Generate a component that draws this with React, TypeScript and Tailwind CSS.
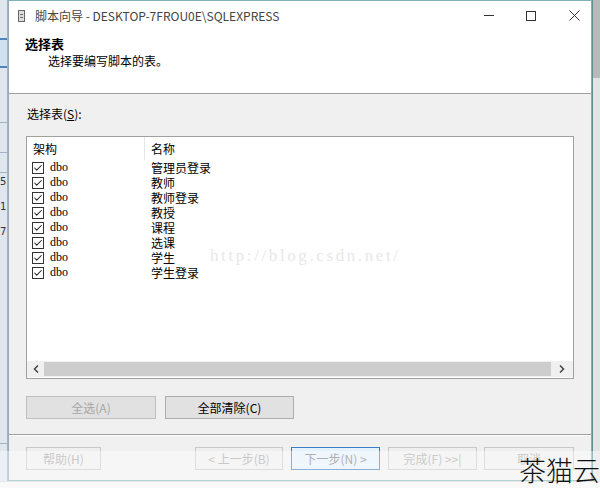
import { Check } from "lucide-react";

const rows = ["管理员登录", "教师", "教师登录", "教授", "课程", "选课", "学生", "学生登录"];

const cjk = { fontFamily: '"Noto Sans CJK SC", "Noto Sans", sans-serif' };

function Btn({ label, disabled, focused, className }: { label: string; disabled?: boolean; focused?: boolean; className: string }) {
    return (
        <div
            className={`h-[23px] flex items-center justify-center text-[12px] border ${
                focused ? "border-[#3a7fc4] bg-[#e5f1fb]" : "border-[#adadad] bg-[#e1e1e1]"
            } ${disabled ? "text-[#a6a6a6]" : "text-black"} ${className}`}
        >
            {label}
        </div>
    );
}

export default function App() {
    return (
        <div className="w-[600px] h-[488px] relative overflow-hidden bg-[#f4f4f4] flex flex-col" style={cjk}>
            <div className="flex h-[481px]">
                {/* background app, left */}
                <div className="w-[8px] bg-[#dfe6ee] flex flex-col text-[10px] leading-none text-[#333] border-r border-[#9fb2c6]">
                    <div className="h-[38px]" />
                    <div className="h-[30px] border-y-2 border-[#4f86b8] bg-[#cfe0f0]" />
                    <div className="h-[55px] border-b border-[#9fb2c6]" />
                    <div className="h-[30px] border-b border-[#9fb2c6]" />
                    <div className="h-[20px] border-b border-[#9fb2c6]" />
                    <div className="mt-[4px] space-y-[15px] font-['DejaVu_Sans']">
                        <div>5</div>
                        <div>1</div>
                        <div>7</div>
                    </div>
                    <div className="flex-1" />
                    <div className="h-[38px] border-t border-[#9fb2c6]" />
                </div>

                {/* dialog */}
                <div className="w-[584px] flex flex-col bg-[#f0f0f0] border border-[#7db3b6] border-l-[#9ab]">
                    {/* title bar */}
                    <div className="h-[29px] bg-white flex items-center">
                        <div className="ml-[9px] w-[7px] h-[12px] border border-[#666] bg-[#ddd] flex flex-col justify-center gap-[2px] px-[1px]">
                            <div className="h-px bg-[#666]" />
                            <div className="h-px bg-[#666]" />
                        </div>
                        <div className="ml-[10px] text-[12px] text-[#444]">脚本向导 - DESKTOP-7FROU0E\SQLEXPRESS</div>
                        <div className="flex-1" />
                        <div className="w-[10px] h-px bg-[#333] mr-[32px]" />
                        <div className="w-[10px] h-[10px] border border-[#333] mr-[33px]" />
                        <svg width="11" height="11" viewBox="0 0 11 11" className="mr-[11px]">
                            <path d="M0.5 0.5L10.5 10.5M10.5 0.5L0.5 10.5" stroke="#333" strokeWidth="1" />
                        </svg>
                    </div>
                    {/* header */}
                    <div className="h-[64px] bg-white border-b border-[#a0a0a0] pl-[16px] pt-[5px]">
                        <div className="text-[13px] font-bold leading-[18px] text-black">选择表</div>
                        <div className="text-[12px] leading-[15px] pl-[23px] text-black">选择要编写脚本的表。</div>
                    </div>
                    {/* body */}
                    <div className="flex-1 flex flex-col px-[17px]">
                        <div className="mt-[12px] ml-[1px] text-[12px] leading-[16px] text-black">选择表(<span className="underline">S</span>):</div>
                        <div className="mt-[14px] h-[243px] bg-white border border-[#a0a0a0] flex flex-col relative">
                            <div className="h-[23px] flex items-center text-[12px] text-black">
                                <div className="w-[118px] pl-[6px] border-r border-[#e5e5e5] h-full flex items-center">架构</div>
                                <div className="pl-[6px]">名称</div>
                            </div>
                            {rows.map((name) => (
                                <div key={name} className="h-[15px] flex items-center text-[12px] leading-[15px] text-black">
                                    <div className="w-[12px] h-[12px] ml-[5px] border border-[#333] bg-white flex items-center justify-center">
                                        <Check size={10} strokeWidth={2.5} className="text-[#222]" />
                                    </div>
                                    <div className="ml-[6px] w-[95px] text-[12px] font-['Liberation_Serif'] leading-[15px]">dbo</div>
                                    <div className="pl-[6px] leading-[15px]">{name}</div>
                                </div>
                            ))}
                            <div className="flex-1" />
                            {/* watermark */}
                            <div className="absolute left-[183px] top-[106px] text-[17px] text-[#e8e8e8] font-['Liberation_Serif'] tracking-[2.6px]">
                                http://blog.csdn.net/
                            </div>
                            {/* horizontal scrollbar */}
                            <div className="h-[16px] mb-[1px] flex items-center bg-[#f0f0f0]">
                                <div className="w-[17px] flex items-center justify-center">
                                    <svg width="6" height="8" viewBox="0 0 6 8"><path d="M5 0.5L1.5 4L5 7.5" stroke="#444" strokeWidth="1.5" fill="none" /></svg>
                                </div>
                                <div className="flex-1 h-[14px] bg-[#cdcdcd]" />
                                <div className="w-[22px] flex items-center justify-center">
                                    <svg width="6" height="8" viewBox="0 0 6 8"><path d="M1 0.5L4.5 4L1 7.5" stroke="#444" strokeWidth="1.5" fill="none" /></svg>
                                </div>
                            </div>
                        </div>
                        <div className="mt-[17px] flex gap-[9px]">
                            <Btn label="全选(A)" disabled className="w-[130px] bg-[#cccccc] border-[#bfbfbf]" />
                            <Btn label="全部清除(C)" className="w-[129px]" />
                        </div>
                    </div>
                    <div className="mt-[12px] border-t border-[#a0a0a0] border-b border-b-white" />
                    <div className="flex items-center px-[17px] pt-[11px] pb-[10px]">
                        <Btn label="帮助(H)" disabled className="w-[75px] bg-[#efefef] border-[#c8c8c8]" />
                        <div className="flex-1" />
                        <Btn label="< 上一步(B)" disabled className="w-[88px] bg-[#efefef] border-[#c8c8c8]" />
                        <Btn label="下一步(N) >" focused className="ml-[8px] w-[89px] text-[#7a7a7a]!" />
                        <Btn label="完成(F) >>|" disabled className="ml-[8px] w-[89px] bg-[#efefef] border-[#c8c8c8]" />
                        <Btn label="取消" disabled className="ml-[7px] w-[90px] bg-[#efefef] border-[#c8c8c8]" />
                    </div>
                </div>

                {/* background app, right */}
                <div className="flex-1 bg-[#e4e4e4] border-l border-[#5e8f92] flex flex-col">
                    <div className="h-[78px] bg-[#b9b9b9]" />
                    <div className="flex-1" />
                </div>
            </div>
            <div className="flex-1 bg-[#f6f6f6] border-t border-[#d8d8d8]" />

            {/* overlay watermark */}
            <div className="absolute left-0 right-0 top-[451px] bottom-0 bg-white/40" />
            <div className="absolute right-[0px] top-[454px] text-[27px] leading-[32px] font-light text-[#111]" style={cjk}>
                茶猫云
            </div>
        </div>
    );
}
